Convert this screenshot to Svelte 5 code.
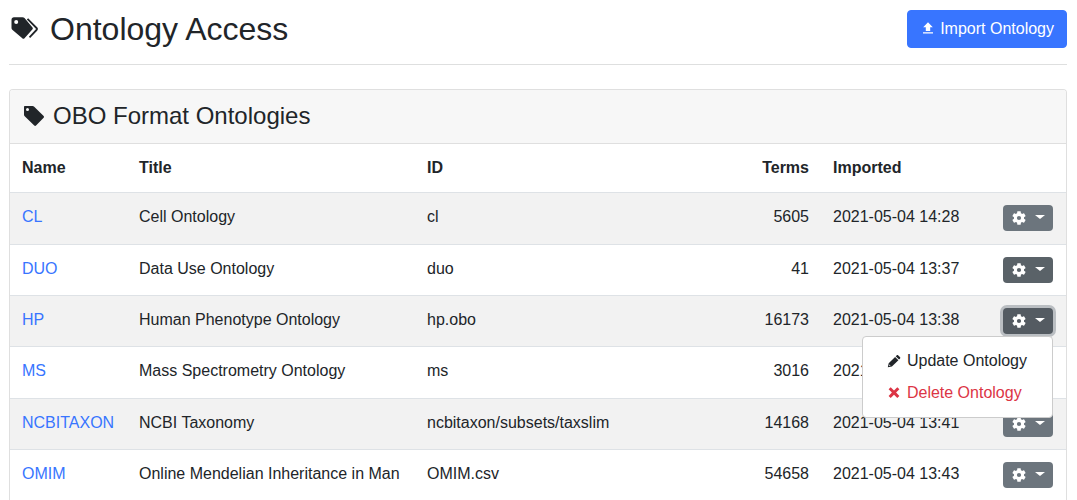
<script>
  const ontologies = [
    { name: 'CL', title: 'Cell Ontology', id: 'cl', terms: 5605, imported: '2021-05-04 14:28' },
    { name: 'DUO', title: 'Data Use Ontology', id: 'duo', terms: 41, imported: '2021-05-04 13:37' },
    { name: 'HP', title: 'Human Phenotype Ontology', id: 'hp.obo', terms: 16173, imported: '2021-05-04 13:38' },
    { name: 'MS', title: 'Mass Spectrometry Ontology', id: 'ms', terms: 3016, imported: '2021-05-04 13:39' },
    { name: 'NCBITAXON', title: 'NCBI Taxonomy', id: 'ncbitaxon/subsets/taxslim', terms: 14168, imported: '2021-05-04 13:41' },
    { name: 'OMIM', title: 'Online Mendelian Inheritance in Man', id: 'OMIM.csv', terms: 54658, imported: '2021-05-04 13:43' }
  ];
  let openMenu = $state('HP');
  let highlighted = $state('DUO');

  const dark = $derived([highlighted, 'MS']);

  function toggle(name) {
    openMenu = openMenu === name ? '' : name;
  }
</script>

<main>
  <header class="page-header">
    <h1>
      <svg class="tags" viewBox="0 0 28 24" aria-hidden="true">
        <path fill-rule="evenodd" d="M3 .3h8.500c.8 0 1.500.3 2 .8l7.800 9.200c.7.800.7 1.500 0 2.200l-7.800 8.700c-.7.700-1.500.700-2.200 0L1.300 12.800C.8 12.300.5 11.700.5 11V2.800C.5 1.300 1.500.3 3 .3zm2.200 2.800a2 2 0 1 0 0 4 2 2 0 0 0 0-4z" />
        <path class="line" d="M16.500 1.800l9 9.200c.7.700.7 1.300 0 2l-7 7.300" />
      </svg>
      Ontology Access
    </h1>
    <button class="import" type="button">
      <svg viewBox="0 0 16 16" aria-hidden="true"><path d="M5.800 10V6.300H3.200L8 1.300l4.800 5h-2.600V10zM3 11.200h10v1.400H3z" /></svg>
      Import Ontology
    </button>
  </header>

  <section class="card">
    <h2>
      <svg viewBox="0 0 22 22" aria-hidden="true">
        <path fill-rule="evenodd" d="M2 1h7.500c.7 0 1.200.2 1.700.7l9.200 9.100c.8.800.8 1.500 0 2.300l-7.100 7.200c-.8.800-1.500.800-2.300 0L1.700 11.200C1.200 10.700 1 10.200 1 9.500V2c0-.6.4-1 1-1zm2.500 2.100a1.500 1.500 0 1 0 0 3 1.500 1.500 0 0 0 0-3z" />
      </svg>
      OBO Format Ontologies
    </h2>
    <table>
      <colgroup>
        <col class="c-name" /><col class="c-title" /><col /><col class="c-terms" /><col class="c-date" /><col class="c-menu" />
      </colgroup>
      <thead>
        <tr><th>Name</th><th>Title</th><th>ID</th><th class="num">Terms</th><th>Imported</th><th></th></tr>
      </thead>
      <tbody>
        {#each ontologies as o (o.name)}
          <tr>
            <td><a href={'#' + o.name}>{o.name}</a></td>
            <td>{o.title}</td>
            <td>{o.id}</td>
            <td class="num">{o.terms}</td>
            <td>{o.imported}</td>
            <td class="actions">
              <div class="dropdown">
                <button
                  class="toggle"
                  class:hover={dark.includes(o.name)}
                  class:open={openMenu === o.name}
                  type="button"
                  aria-label={'Actions for ' + o.name}
                  aria-expanded={openMenu === o.name}
                  onmouseenter={() => (highlighted = o.name)}
                  onclick={() => toggle(o.name)}
                >
                  <svg viewBox="2 2 20 20" aria-hidden="true">
                    <path fill-rule="evenodd" d="M19.140 12.940c.04-.3.06-.61.06-.94 0-.32-.02-.64-.07-.94l2.030-1.580c.18-.14.23-.41.12-.61l-1.920-3.320c-.12-.22-.37-.29-.59-.22l-2.390.96c-.5-.38-1.030-.7-1.620-.94l-.36-2.540c-.04-.24-.24-.41-.48-.41h-3.840c-.24 0-.43.17-.47.41l-.36 2.540c-.59.24-1.130.57-1.620.94l-2.390-.96c-.22-.08-.47 0-.59.22L2.740 8.870c-.12.21-.08.47.12.61l2.030 1.580c-.05.3-.09.63-.09.94s.02.64.07.94l-2.030 1.580c-.18.14-.23.41-.12.61l1.920 3.320c.12.22.37.29.59.22l2.390-.96c.5.38 1.030.7 1.620.94l.36 2.540c.05.24.24.41.48.41h3.840c.24 0 .44-.17.47-.41l.36-2.540c.59-.24 1.130-.56 1.620-.94l2.390.96c.22.08.47 0 .59-.22l1.920-3.320c.12-.22.07-.47-.12-.61l-2.010-1.580zM12 15a3 3 0 1 1 0-6 3 3 0 0 1 0 6z" />
                  </svg>
                  <span class="caret"></span>
                </button>
                {#if openMenu === o.name}
                  <div class="menu">
                    <button type="button">
                      <svg viewBox="0 0 14 14" aria-hidden="true"><path d="M9.600 1.400c.6-.6 1.100-.6 1.700 0l1.600 1.600c.6.600.6 1.100 0 1.700l-.9.900-3.300-3.300zM8.100 2.900l3.300 3.300-6.500 6.300L.8 13.300l.9-4.100zM2.500 10.500l-.4 1.500 1.500-.4z" fill-rule="evenodd" /></svg>
                      Update Ontology
                    </button>
                    <button class="danger" type="button">
                      <svg viewBox="0 0 14 14" aria-hidden="true"><path d="M3.700 1.200L7 4.500l3.300-3.300 2.100 2.100L9.100 6.600l3.300 3.300-2.100 2.100L7 8.700 3.700 12l-2.100-2.100 3.300-3.300-3.300-3.300z" /></svg>
                      Delete Ontology
                    </button>
                  </div>
                {/if}
              </div>
            </td>
          </tr>
        {/each}
      </tbody>
    </table>
  </section>
</main>

<style>
  :global(body) {
    background: #fff;
    overflow: hidden;
  }
  main {
    padding: 10px 10px 0 9px;
    color: #212529;
    font: 16px/24px 'Liberation Sans', Arial, sans-serif;
  }
  svg {
    fill: currentColor;
    flex: none;
  }
  button {
    font: inherit;
    cursor: pointer;
  }
  .page-header {
    display: flex;
    justify-content: space-between;
    align-items: flex-start;
    padding-bottom: 16px;
    border-bottom: 1px solid #dedfdf;
    margin-bottom: 24px;
  }
  h1,
  h2 {
    display: flex;
    align-items: center;
    margin: 0;
    font-weight: 400;
  }
  h1 {
    gap: 11px;
    padding-left: 2px;
    font-size: 32px;
    line-height: 38px;
  }
  .tags {
    width: 28px;
    height: 24px;
  }
  .line {
    fill: none;
    stroke: currentColor;
    stroke-width: 1.8;
  }
  .import {
    display: flex;
    align-items: center;
    gap: 4px;
    padding: 6px 12px;
    border: 1px solid #3875ff;
    border-radius: 4px;
    background: #3875ff;
    color: #fff;
  }
  .import svg {
    width: 16px;
    height: 16px;
  }
  .card {
    border: 1px solid #dfdfdf;
    border-bottom: 0;
    border-radius: 4px 4px 0 0;
  }
  h2 {
    gap: 8px;
    padding: 11px 13px 13px;
    border-bottom: 1px solid #dfdfdf;
    border-radius: 3px 3px 0 0;
    background: #f7f7f7;
    font-size: 24px;
    line-height: 29px;
  }
  h2 svg {
    width: 22px;
    height: 22px;
  }
  table {
    width: 100%;
    table-layout: fixed;
    border-spacing: 0;
  }
  .c-name {
    width: 117px;
  }
  .c-title {
    width: 288px;
  }
  .c-terms {
    width: 71px;
  }
  .c-date {
    width: 160px;
  }
  .c-menu {
    width: 85px;
  }
  th,
  td {
    padding: 12px;
    text-align: left;
    vertical-align: top;
  }
  th {
    font-weight: 700;
  }
  td {
    height: 26px;
    border-top: 1px solid #dee2e6;
  }
  tbody tr:nth-child(3n + 1) td {
    height: 27px;
  }
  tbody tr:nth-child(odd) {
    background: #f2f2f2;
  }
  .num {
    text-align: right;
  }
  a {
    color: #3875ff;
    text-decoration: none;
  }
  .actions {
    padding-right: 13px;
  }
  .dropdown {
    position: relative;
    display: flex;
    justify-content: flex-end;
  }
  .toggle {
    display: flex;
    align-items: center;
    gap: 8px;
    height: 26px;
    padding: 0 8px;
    border: 0;
    border-radius: 4px;
    background: #6c757d;
    color: #fff;
  }
  .toggle svg {
    width: 16px;
    height: 14px;
  }
  .caret {
    margin-bottom: 2px;
    border: 5px solid transparent;
    border-top: 4px solid #fff;
    border-bottom: 0;
  }
  .toggle.hover {
    background: #5a6268;
  }
  .toggle.open {
    background: #545b62;
    box-shadow: 0 0 0 3px rgba(130, 138, 145, 0.5);
  }
  .menu {
    position: absolute;
    z-index: 1;
    top: 28px;
    right: 0;
    padding: 8px 0;
    border: 1px solid #ccc;
    border-radius: 4px;
    background: #fff;
  }
  .menu button {
    display: flex;
    align-items: center;
    gap: 6px;
    width: 100%;
    padding: 4px 25px 4px 24px;
    border: 0;
    background: none;
    color: #212529;
    white-space: nowrap;
  }
  .menu .danger {
    color: #dc3545;
  }
  .menu svg {
    width: 14px;
    height: 14px;
  }
</style>
